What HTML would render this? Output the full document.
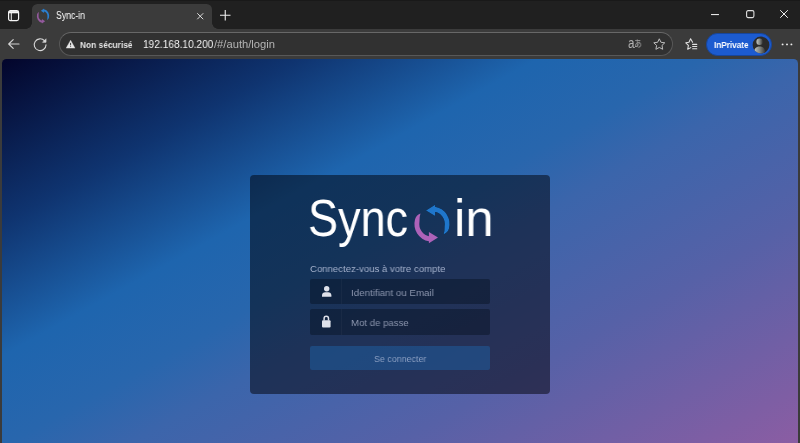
<!DOCTYPE html>
<html lang="fr">
<head>
<meta charset="utf-8">
<title>Sync-in</title>
<style>
*{box-sizing:border-box;margin:0;padding:0}
html,body{width:800px;height:443px;overflow:hidden;background:#3b3b3b;font-family:"Liberation Sans",sans-serif}
/* every box below is placed in window coordinates: wrappers stay static so #win is the only containing block */
#win{position:absolute;left:0;top:0;width:800px;height:443px;background:#3b3b3b;overflow:hidden}
#strip{position:absolute;left:0;top:0;width:800px;height:28.6px;background:#202020;border-top:1px solid #191919}
#tab{position:absolute;left:32px;top:4px;width:180px;height:26px;background:#3b3b3b;border-radius:5.5px 5.5px 0 0}
#tab:before,#tab:after{content:"";position:absolute;bottom:1px;width:6px;height:6px;background:radial-gradient(circle at 0 0,rgba(0,0,0,0) 5.5px,#3b3b3b 6px)}
#tab:before{left:-6px}
#tab:after{right:-6px;background:radial-gradient(circle at 100% 0,rgba(0,0,0,0) 5.5px,#3b3b3b 6px)}
#omni{position:absolute;left:59.2px;top:32.1px;width:613.4px;height:24.3px;border-radius:12.2px;background:#313131;border:1px solid #585858;border-top-color:#686868}
#priv{position:absolute;left:706px;top:33px;width:66px;height:22.5px;border-radius:11.25px;background:#1c5bd0;border:1px solid #17469c}
#page{position:absolute;left:2px;top:59.4px;width:796px;height:384px;border-radius:4.5px 4.5px 0 0;
 background:linear-gradient(151deg,#03052b 0%,#0f3470 20%,#1e65ae 36%,#2866ad 47%,#3b65ab 55%,#5661a7 73%,#8b5da3 100%)}
#card{position:absolute;left:250px;top:175.2px;width:300px;height:218.5px;border-radius:4px;background:rgba(0,0,6,.5)}
.inp{position:absolute;left:310px;width:180px;height:25px;border-radius:2px;background:rgba(0,8,20,.36)}
.sep{position:absolute;left:341px;width:1px;height:25px;background:rgba(255,255,255,.035)}
#b{position:absolute;left:310px;top:346.2px;width:180px;height:24px;border-radius:2px;background:rgba(30,96,164,.5)}
.t{position:absolute;white-space:nowrap;transform-origin:0 50%;display:block;will-change:transform}
svg{position:absolute;overflow:visible}
</style>
</head>
<body>
<div id="win">

 <!-- ===== title bar / tab strip ===== -->
 <header>
  <div id="strip"></div>
  <!-- tab actions -->
  <svg style="left:8px;top:9.9px" width="11.2" height="11.2" viewBox="0 0 11.2 11.2" fill="none" stroke="#f4f4f4">
   <rect x=".6" y=".6" width="10" height="10" rx="1.8" stroke-width="1.2"/>
   <path d="M.8 2.2H10.4" stroke-width="2.2"/><path d="M3.3 3V10.4" stroke-width="1"/>
  </svg>
  <!-- active tab -->
  <div>
   <div id="tab"></div>
   <svg style="left:42.5px;top:15.9px" width="1" height="1">
    <g transform="scale(.35,.385)"><use href="#arw" fill="#2a7fd0"/><use href="#arw" fill="#93599c" transform="rotate(180)"/></g>
   </svg>
   <span id="tabt" class="t" style="left:56.00px;top:9.79px;font:400 10px/11.490px 'Liberation Sans', sans-serif;color:#ffffff;transform:scaleX(0.8693)">Sync-in</span>
   <svg style="left:197.3px;top:13px" width="6.5" height="6.5" viewBox="0 0 7 7" stroke="#e8e8e8" stroke-width="1" fill="none"><path d="M.3.3L6.7 6.7M6.7.3L.3 6.7"/></svg>
  </div>
  <!-- new tab -->
  <svg style="left:220px;top:10px" width="10.5" height="10.5" viewBox="0 0 10.5 10.5" stroke="#f0f0f0" stroke-width="1.1" fill="none"><path d="M5.25 0V10.5M0 5.25H10.5"/></svg>
  <!-- window controls -->
  <svg style="left:711px;top:14px" width="8" height="1.2" viewBox="0 0 8 1.2"><rect width="8" height="1.1" fill="#e6e6e6"/></svg>
  <svg style="left:745.5px;top:10px" width="8.5" height="8.2" viewBox="0 0 8.5 8.2" fill="none" stroke="#e0e0e0" stroke-width="1.1"><rect x=".6" y=".6" width="7.3" height="7" rx="1.5"/></svg>
  <svg style="left:780px;top:10px" width="8" height="8" viewBox="0 0 8 8" stroke="#ededed" stroke-width="1" fill="none"><path d="M.2.2L7.8 7.8M7.8.2L.2 7.8"/></svg>
 </header>

 <!-- ===== toolbar ===== -->
 <nav>
  <!-- back -->
  <svg style="left:8px;top:39px" width="11.5" height="10" viewBox="0 0 11.5 10" stroke="#d4d4d4" stroke-width="1.15" fill="none" stroke-linecap="round" stroke-linejoin="round"><path d="M5.2.6L.7 5L5.2 9.4M.9 5H11"/></svg>
  <!-- reload -->
  <svg style="left:34.4px;top:38px" width="12.5" height="12.5" viewBox="0 0 12.5 12.5" stroke="#d8d8d8" stroke-width="1.1" fill="none" stroke-linecap="round" stroke-linejoin="round"><path d="M10.6 2.9A5.9 5.9 0 1 0 12 6.9"/><path d="M12 1.2V4.3H8.9Z" fill="#d8d8d8" stroke-width=".7"/></svg>
  <!-- address bar -->
  <div>
   <div id="omni"></div>
   <svg style="left:66.2px;top:39.5px" width="9.2" height="8.4" viewBox="0 0 9.6 8.8"><path d="M4.8.2L9.4 8.5H.2Z" fill="#e6e6e6" stroke="#e6e6e6" stroke-width=".4" stroke-linejoin="round"/><path d="M4.8 3V5.6M4.8 6.6V7.4" stroke="#313131" stroke-width="1"/></svg>
   <span id="nsec" class="t" style="left:80.00px;top:38.57px;font:700 9.8px/11.260px 'Liberation Sans', sans-serif;color:#e4e4e4;transform:scaleX(0.8532)">Non sécurisé</span>
   <span id="url" class="t" style="left:143.20px;top:38.07px;font:400 11px/12.639px 'Liberation Sans', sans-serif;color:#f4f4f4;transform:scaleX(0.9206)">192.168.10.200</span>
   <span id="url2" class="t" style="left:214.20px;top:38.07px;font:400 11px/12.639px 'Liberation Sans', sans-serif;color:#b4b4b4;transform:scaleX(1.0177)">/#/auth/login</span>
   <span id="aa" class="t" style="left:627.60px;top:35.21px;font:400 14px/16.086px 'Liberation Sans', sans-serif;color:#b4b4b4;transform:scaleX(0.8208)">a</span>
   <span id="aa2" class="t" style="left:633.60px;top:39.68px;font:400 8.6px/9.881px 'Liberation Sans', 'Noto Sans CJK JP', sans-serif;color:#b4b4b4;transform:scaleX(0.9060)">あ</span>
   <svg style="left:652.5px;top:38.3px" width="12.6" height="12.2" viewBox="0 0 12.6 12.2" fill="none" stroke="#bdbdbd" stroke-width="1" stroke-linejoin="round"><path d="M6.3.8L7.95 4.3L11.8 4.8L9 7.45L9.7 11.3L6.3 9.45L2.9 11.3L3.6 7.45L.8 4.8L4.65 4.3Z"/></svg>
  </div>
  <!-- favorites -->
  <svg style="left:685px;top:38.3px" width="12.6" height="12.2" viewBox="0 0 12.6 12.2" fill="none" stroke="#e2e2e2" stroke-width="1.05" stroke-linejoin="round" stroke-linecap="round"><path d="M7.6 4.2L5.6.8L3.95 4.3L.8 4.8L3.4 7.45L2.7 11.3L5.8 9.6"/><path d="M7.6 6.4H11.8M7.6 8.6H11.8M7.6 10.8H11.8"/></svg>
  <!-- InPrivate profile pill -->
  <div>
   <div id="priv"></div>
   <span id="inp" class="t" style="left:713.50px;top:38.57px;font:700 9.8px/11.260px 'Liberation Sans', sans-serif;color:#ffffff;transform:scaleX(0.8335)">InPrivate</span>
   <svg style="left:751.6px;top:35.5px" width="18" height="18" viewBox="0 0 18 18"><defs><clipPath id="avc"><circle cx="9" cy="9" r="8.4"/></clipPath><linearGradient id="avg" x1="0" x2="1" y1="0" y2="0"><stop offset="0" stop-color="#c4c8c4"/><stop offset=".5" stop-color="#868a86"/><stop offset="1" stop-color="#343434"/></linearGradient></defs><circle cx="9" cy="9" r="8.4" fill="#2b2b2b"/><g clip-path="url(#avc)" fill="url(#avg)"><circle cx="7.6" cy="5.8" r="3.2"/><path d="M1.8 18C1.8 12.6 4 10.4 7.6 10.4S13.4 12.6 13.4 18Z"/></g></svg>
  </div>
  <!-- menu -->
  <svg style="left:780px;top:42px" width="14" height="5" viewBox="0 0 14 5" fill="#f0f0f0"><circle cx="2.6" cy="2.4" r=".95"/><circle cx="7" cy="2.4" r=".95"/><circle cx="11.4" cy="2.4" r=".95"/></svg>
 </nav>

 <!-- ===== web page : Sync-in login ===== -->
 <main>
  <div id="page"></div>
  <div id="card"></div>
  <!-- logo -->
  <h1>
   <span id="lg1" class="t" style="left:308.20px;top:189.11px;font:400 52px/59.748px 'Liberation Sans', sans-serif;color:#ffffff;transform:scaleX(0.8658)">Sync</span>
   <svg style="left:431.9px;top:224.3px" width="1" height="1">
    <g id="arw" transform="scale(1.035)"><path d="M-5.8,-13.1 L3,-18.6 L3,-7.8 Z M2.95,-16.74 A17,17 0 0 1 16.42,4.4 Q15.4,8.4 11.15,10.04 Q12.3,6.5 12.11,2.14 A12.3,12.3 0 0 0 2.14,-12.11 Z"/></g>
    <use href="#arw" fill="#1f76cb"/>
    <use href="#arw" fill="#ad62b8" transform="rotate(180)"/>
   </svg>
   <span id="lg2" class="t" style="left:454.40px;top:189.11px;font:400 52px/59.748px 'Liberation Sans', sans-serif;color:#ffffff;transform:scaleX(0.9806)">in</span>
  </h1>
  <form>
   <span id="conn" class="t" style="left:309.80px;top:262.68px;font:400 9.9px/11.375px 'Liberation Sans', sans-serif;color:#a5b2cd;transform:scaleX(0.9712)">Connectez-vous à votre compte</span>
   <!-- login field -->
   <div>
    <div class="inp" style="top:278.7px"></div><div class="sep" style="top:278.7px"></div>
    <svg style="left:322px;top:286px" width="9.4" height="10.8" viewBox="0 0 9.4 10.8" fill="#dee1ea"><circle cx="4.7" cy="2.7" r="2.7"/><path d="M0 10.8V9.2C0 7.4 1.5 6.3 3.2 6.3H6.2C7.9 6.3 9.4 7.4 9.4 9.2V10.8Z"/></svg>
    <span id="ph1" class="t" style="left:351.40px;top:286.88px;font:400 9.9px/11.375px 'Liberation Sans', sans-serif;color:#8b95ad;transform:scaleX(0.9857)">Identifiant ou Email</span>
   </div>
   <!-- password field -->
   <div>
    <div class="inp" style="top:309.2px;height:25.4px"></div><div class="sep" style="top:309.2px;height:25.4px"></div>
    <svg style="left:322.3px;top:315px" width="8.6" height="12.6" viewBox="0 0 8.6 12.6"><path d="M2.1 5.6V3.4A2.2 2.2 0 0 1 6.5 3.4V5.6" fill="none" stroke="#dee1ea" stroke-width="1.5"/><rect x="0" y="5.2" width="8.6" height="7.4" rx="1.1" fill="#dee1ea"/></svg>
    <span id="ph2" class="t" style="left:351.40px;top:316.97px;font:400 9.8px/11.260px 'Liberation Sans', sans-serif;color:#8b95ad;transform:scaleX(0.9825)">Mot de passe</span>
   </div>
   <!-- submit -->
   <div>
    <div id="b"></div>
    <span id="btn" class="t" style="left:373.80px;top:352.87px;font:400 9.7px/11.145px 'Liberation Sans', sans-serif;color:#8b9fc2;transform:scaleX(0.9178)">Se connecter</span>
   </div>
  </form>
 </main>

</div>
</body>
</html>
